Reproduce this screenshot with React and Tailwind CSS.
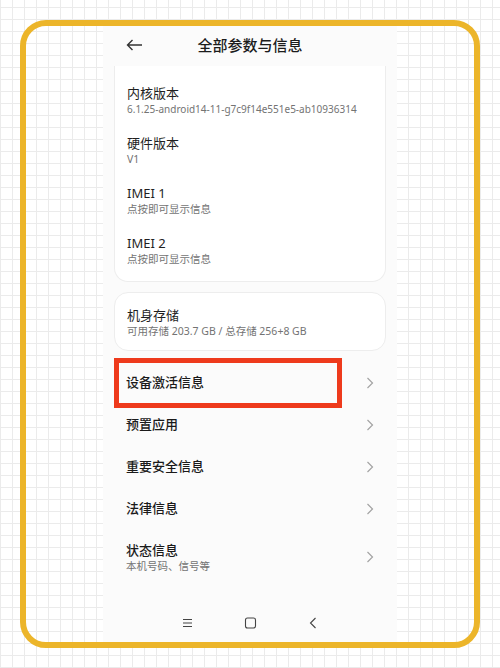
const specs = [
  { title: "内核版本", sub: "6.1.25-android14-11-g7c9f14e551e5-ab10936314", size: "text-[10px]" },
  { title: "硬件版本", sub: "V1", size: "text-[10.5px]" },
  { title: "IMEI 1", sub: "点按即可显示信息", size: "text-[10.5px]" },
  { title: "IMEI 2", sub: "点按即可显示信息", size: "text-[10.5px]" },
];

const links = ["预置应用", "重要安全信息", "法律信息"];

function Chevron() {
  return (
    <svg width="8" height="12" viewBox="0 0 8 12" className="shrink-0">
      <path d="M1.5 1 L6.5 6 L1.5 11" fill="none" stroke="#a3a3a3" strokeWidth="1.2" />
    </svg>
  );
}

export default function App() {
  return (
    <div className="w-[500px] h-[668px] p-5 bg-white bg-[linear-gradient(#ebebeb_1px,transparent_1px),linear-gradient(90deg,#ebebeb_1px,transparent_1px)] bg-[size:12px_12px] bg-[position:0_7px] font-['Noto_Sans','Noto_Sans_CJK_SC',sans-serif]">
      <div className="h-full border-[6px] border-[#ecb52a] rounded-[26px] flex justify-center">
        <div className="w-[294px] h-full bg-[#fbfbfb] flex flex-col">
          {/* Header */}
          <div className="h-[38px] relative flex items-center justify-center shrink-0">
            <svg width="17" height="12" viewBox="0 0 17 12" className="absolute left-[23px]">
              <path d="M16 6 H1.5 M6.5 1 L1.5 6 L6.5 11" fill="none" stroke="#333" strokeWidth="1.4" />
            </svg>
            <span className="text-[15px] text-[#1c1c1c] font-medium">全部参数与信息</span>
          </div>

          {/* Specs card */}
          <div className="mx-[11px] mt-[2px] bg-white border-x border-b border-[#ededed] rounded-b-[14px] pt-[18px] pb-[15px] px-3 flex flex-col gap-[18px]">
            {specs.map((s) => (
              <div key={s.title} className="flex flex-col">
                <span className="text-[13px] leading-[18px] text-[#1f1f1f]">{s.title}</span>
                <span className={`${s.size} leading-[14px] text-[#737373]`}>{s.sub}</span>
              </div>
            ))}
          </div>

          {/* Storage card */}
          <div className="mx-[11px] mt-[10px] bg-white border border-[#ededed] rounded-[14px] pt-[13px] pb-[12px] px-3 flex flex-col">
            <span className="text-[13px] leading-[18px] text-[#1f1f1f]">机身存储</span>
            <span className="text-[10.5px] leading-[14px] text-[#737373]">可用存储 203.7 GB / 总存储 256+8 GB</span>
          </div>

          {/* Links */}
          <div className="mt-[11px] flex flex-col">
            <div className="relative h-[42px] px-[23px] flex items-center justify-between">
              <span className="text-[13px] text-[#1a1a1a] font-medium">设备激活信息</span>
              <Chevron />
              <div className="absolute left-[11px] top-[-4px] w-[228px] h-[50px] border-[5px] border-[#ee3a1c]" />
            </div>
            {links.map((t) => (
              <div key={t} className="h-[42px] px-[23px] flex items-center justify-between">
                <span className="text-[13px] text-[#1a1a1a] font-medium">{t}</span>
                <Chevron />
              </div>
            ))}
            <div className="h-[54px] px-[23px] flex items-center justify-between">
              <div className="flex flex-col">
                <span className="text-[13px] leading-[18px] text-[#1a1a1a] font-medium">状态信息</span>
                <span className="text-[10.5px] leading-[14px] text-[#737373]">本机号码、信号等</span>
              </div>
              <Chevron />
            </div>
          </div>

          {/* Navigation bar */}
          <div className="mt-auto h-[38px] flex items-center justify-center gap-[50px] shrink-0">
            <svg width="13" height="10" viewBox="0 0 13 10">
              <path d="M2 1.5 H11 M2 5 H11 M2 8.5 H11" stroke="#444" strokeWidth="1.1" />
            </svg>
            <svg width="13" height="12" viewBox="0 0 13 12">
              <rect x="1.5" y="1" width="10" height="10" rx="2" fill="none" stroke="#444" strokeWidth="1.1" />
            </svg>
            <svg width="13" height="12" viewBox="0 0 13 12">
              <path d="M8.5 1 L3.5 6 L8.5 11" fill="none" stroke="#444" strokeWidth="1.1" />
            </svg>
          </div>
        </div>
      </div>
    </div>
  );
}
